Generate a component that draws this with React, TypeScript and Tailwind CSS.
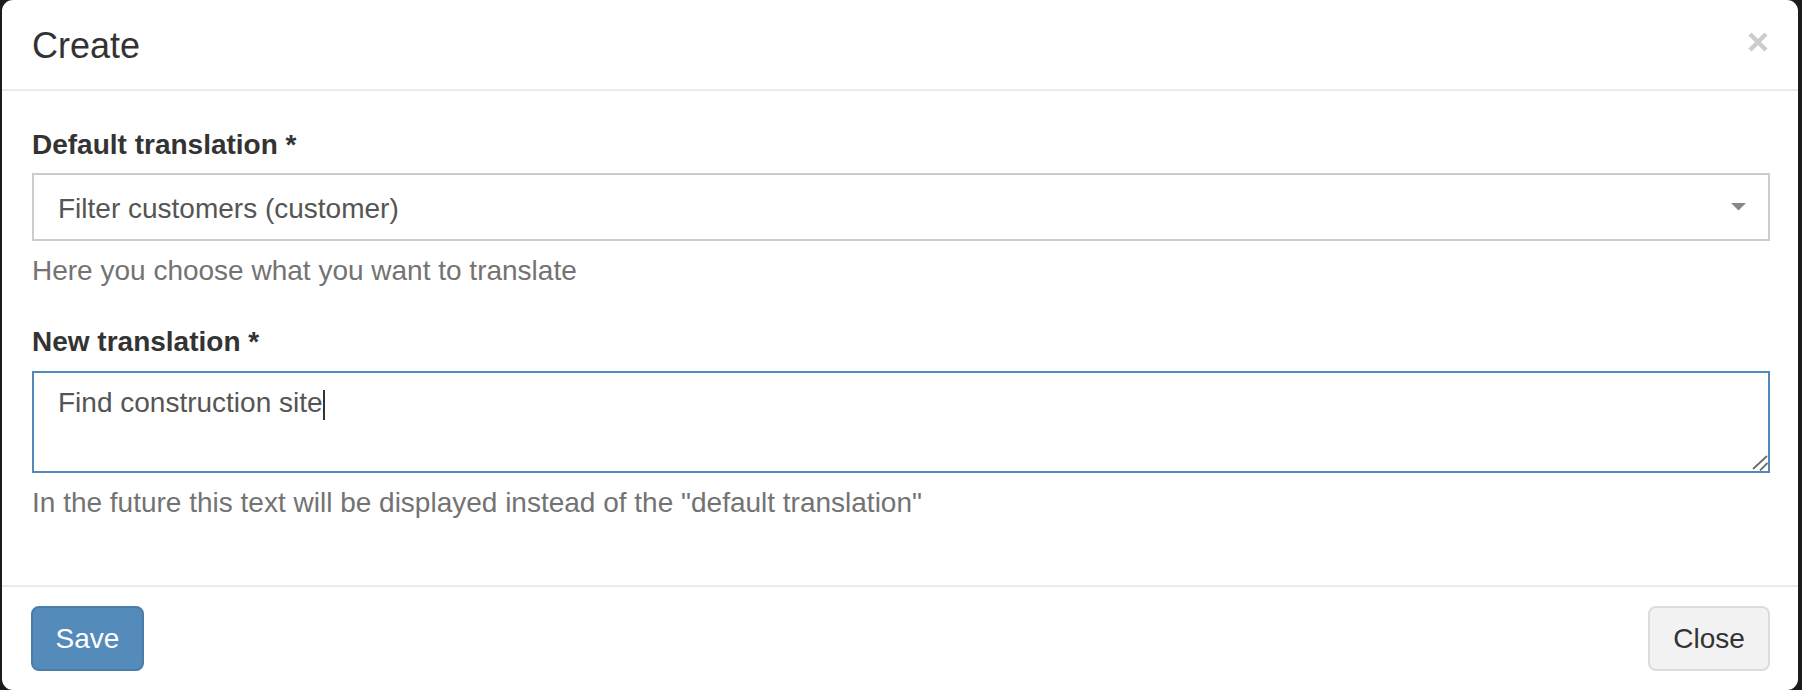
import React from 'react';

const CloseIcon: React.FC = () => (
  <svg width="20" height="20" viewBox="0 0 20 20" className="block">
    <path d="M2 2 L18 18 M18 2 L2 18" stroke="#cccccc" strokeWidth="4.5" />
  </svg>
);

const Caret: React.FC = () => (
  <svg width="15" height="8" viewBox="0 0 15 8" className="block">
    <polygon points="0,0 15,0 7.5,7.5" fill="#888888" />
  </svg>
);

const ResizeGrip: React.FC = () => (
  <svg width="16" height="16" viewBox="0 0 16 16" className="absolute right-[0px] bottom-[0px]">
    <path d="M1 14 L15 1 M8 15.5 L15.5 8" stroke="#6b6b6b" strokeWidth="1.8" />
  </svg>
);

const App: React.FC = () => {
  return (
    <div className="h-[690px] w-[1802px] bg-[#1c1c1c] px-[2px] font-['Liberation_Sans',Arial,sans-serif]">
      <div className="flex h-full w-[1796px] flex-col rounded-[11px] bg-white">
        {/* header */}
        <div className="flex items-start justify-between border-b-2 border-[#ebebeb] pt-[20px] pb-[18px] pl-[30px] pr-[30px]">
          <h4 className="text-[36px] leading-[51.4px] text-[#333333]">Create</h4>
          <button className="mt-[12px]">
            <CloseIcon />
          </button>
        </div>

        {/* body */}
        <div className="flex-1 pt-[34px] pl-[30px] pr-[28px]">
          <div>
            <label className="mb-[8px] block text-[28px] leading-[40px] font-bold text-[#333333]">
              Default translation *
            </label>
            <div className="flex h-[68px] items-center justify-between border-2 border-[#cccccc] pl-[24px] pr-[22px]">
              <span className="pt-[3px] text-[28px] leading-[40px] text-[#555555]">Filter customers (customer)</span>
              <Caret />
            </div>
            <p className="mt-[10px] text-[28px] leading-[40px] text-[#737373]">
              Here you choose what you want to translate
            </p>
          </div>

          <div className="mt-[31px]">
            <label className="mb-[9px] block text-[28px] leading-[40px] font-bold text-[#333333]">
              New translation *
            </label>
            <div className="relative h-[102px] border-2 border-[#5289b8] px-[24px] pt-[10px]">
              <span className="text-[28px] leading-[40px] text-[#555555]">Find construction site</span>
              <span className="inline-block h-[30px] w-[2px] bg-[#333333] align-[-8px]" />
              <ResizeGrip />
            </div>
            <p className="mt-[10px] text-[28px] leading-[40px] text-[#737373]">
              In the future this text will be displayed instead of the "default translation"
            </p>
          </div>
        </div>

        {/* footer */}
        <div className="flex h-[105px] items-start justify-between border-t-2 border-[#ebebeb] pt-[19px] pl-[29px] pr-[28px]">
          <button className="h-[65px] w-[113px] rounded-[8px] border-2 border-[#4a7ca8] bg-[#548bbb] text-[28px] text-white">
            Save
          </button>
          <button className="h-[65px] w-[122px] rounded-[8px] border-2 border-[#dcdcdc] bg-[#f2f2f2] text-[28px] text-[#333333]">
            Close
          </button>
        </div>
      </div>
    </div>
  );
};

export default App;
